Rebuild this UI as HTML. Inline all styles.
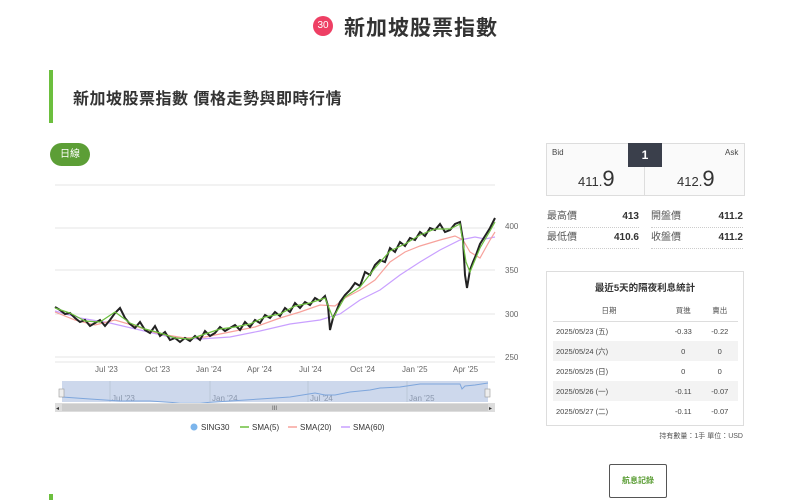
<!DOCTYPE html>
<html><head><meta charset="utf-8"><style>
body{margin:0;width:800px;height:500px;background:#fff;font-family:"Liberation Sans","Noto Sans CJK TC",sans-serif;color:#333;position:relative;overflow:hidden}
.a{position:absolute}
table{border-collapse:collapse}
</style></head><body>
<div class="a" style="left:313px;top:16px;width:20px;height:20px;border-radius:50%;background:#ee3f64;color:#fff;font-size:10px;line-height:20px;text-align:center">30</div>
<div class="a" style="left:344px;top:12px;font-size:21px;color:#333;letter-spacing:1px;font-weight:bold">新加坡股票指數</div>
<div class="a" style="left:49px;top:70px;width:4px;height:53px;background:#6cbf3e"></div>
<div class="a" style="left:73px;top:85px;font-size:16px;color:#333;letter-spacing:0.5px;font-weight:bold">新加坡股票指數 價格走勢與即時行情</div>
<div class="a" style="left:50px;top:143px;width:40px;height:23px;border-radius:12px;background:#5c9e36;color:#fff;font-size:10px;line-height:23px;text-align:center">日線</div>

<svg class="a" style="left:40px;top:175px" width="490" height="265" viewBox="40 175 490 265">
<g stroke="#e6e6e6" stroke-width="1">
<line x1="55" y1="185" x2="495" y2="185"/><line x1="55" y1="228" x2="495" y2="228"/><line x1="55" y1="270" x2="495" y2="270"/><line x1="55" y1="314" x2="495" y2="314"/><line x1="55" y1="357" x2="495" y2="357"/>
<line x1="55" y1="362" x2="495" y2="362"/>
</g>
<g font-size="8" fill="#666">
<text x="505" y="229">400</text><text x="505" y="273">350</text><text x="505" y="317">300</text><text x="505" y="360">250</text>
<text x="95" y="372">Jul '23</text><text x="145" y="372">Oct '23</text><text x="196" y="372">Jan '24</text><text x="247" y="372">Apr '24</text><text x="299" y="372">Jul '24</text><text x="350" y="372">Oct '24</text><text x="402" y="372">Jan '25</text><text x="453" y="372">Apr '25</text>
</g>
<polyline fill="none" stroke="#c9a0ff" stroke-width="1.2" points="55,311 80,318 110,323 140,330 170,337 200,339 230,337 260,331 290,324 320,320 340,314 360,300 380,290 400,275 420,262 440,250 460,240 475,237 485,239 495,237"/>
<polyline fill="none" stroke="#f7a29c" stroke-width="1.2" points="55,312 75,320 95,325 115,320 135,326 160,334 185,338 205,337 230,332 255,327 280,318 300,312 320,305 335,306 345,298 360,290 375,280 390,262 405,252 420,246 440,240 455,236 463,240 470,252 480,258 490,240 495,232"/>
<polyline fill="none" stroke="#222" stroke-width="2" points="55,307 60,310 65,314 70,313 75,318 80,322 85,320 90,326 95,323 100,320 105,326 110,320 115,313 120,308 125,318 130,324 135,328 140,322 145,330 150,333 155,326 160,336 165,332 170,340 175,338 180,342 185,338 190,341 195,336 200,340 205,331 210,336 215,333 220,327 225,331 230,328 235,325 240,330 245,322 250,327 255,320 260,323 265,315 270,318 275,312 280,316 285,308 290,312 295,303 300,308 305,302 310,305 315,298 320,301 325,296 328,306 330,330 333,318 336,312 340,302 345,295 350,290 355,283 360,286 365,272 370,275 375,265 380,260 385,262 390,248 395,252 400,242 405,246 410,238 415,240 420,232 425,236 430,228 435,230 440,224 445,232 450,230 455,224 460,222 463,240 465,275 467,288 470,270 473,262 476,255 480,244 485,236 490,228 495,218"/>
<polyline fill="none" stroke="#6cbf3e" stroke-width="1.2" points="55,308 70,313 85,321 100,322 115,312 130,323 145,329 160,333 175,338 190,339 205,334 220,329 235,327 250,324 265,317 280,314 295,306 310,303 325,298 333,318 345,297 360,287 375,268 390,251 405,244 420,235 435,229 450,229 460,224 466,262 470,272 480,248 490,231 495,222"/>
<rect x="55" y="380" width="440" height="23" fill="#fff"/>
<rect x="62" y="381" width="426" height="21" fill="#cdd8ec"/>
<g stroke="#bcc7d9"><line x1="110" y1="381" x2="110" y2="402"/><line x1="210" y1="381" x2="210" y2="402"/><line x1="308" y1="381" x2="308" y2="402"/><line x1="407" y1="381" x2="407" y2="402"/></g>
<g font-size="8" fill="#8a97ad"><text x="112" y="401">Jul '23</text><text x="212" y="401">Jan '24</text><text x="310" y="401">Jul '24</text><text x="409" y="401">Jan '25</text></g>
<polyline fill="none" stroke="#7ea6dc" stroke-width="1" points="62,397 90,399 120,401 150,401 180,403 200,403 230,401 260,399 290,397 315,393 325,395 335,395 350,392 370,390 380,388 400,387 420,384 440,384 460,384 462,389 465,386 475,385 488,383"/>
<rect x="59" y="389" width="5" height="8" fill="#eee" stroke="#999" stroke-width="0.6"/>
<rect x="485" y="389" width="5" height="8" fill="#eee" stroke="#999" stroke-width="0.6"/>
<rect x="55" y="403" width="440" height="9" fill="#ddd"/>
<rect x="62" y="404" width="426" height="7" fill="#ccc"/>
<text x="56" y="410" font-size="6" fill="#333">◂</text><text x="489" y="410" font-size="6" fill="#333">▸</text>
<text x="272" y="410" font-size="6" fill="#555">III</text>
<circle cx="194" cy="427" r="3.5" fill="#7cb5ec"/><text x="201" y="430" font-size="8" fill="#333">SING30</text>
<line x1="240" y1="427" x2="249" y2="427" stroke="#6cbf3e" stroke-width="1.5"/><text x="252" y="430" font-size="8" fill="#333">SMA(5)</text>
<line x1="288" y1="427" x2="297" y2="427" stroke="#f7a29c" stroke-width="1.5"/><text x="300" y="430" font-size="8" fill="#333">SMA(20)</text>
<line x1="341" y1="427" x2="350" y2="427" stroke="#c9a0ff" stroke-width="1.5"/><text x="353" y="430" font-size="8" fill="#333">SMA(60)</text>
</svg>

<div class="a" style="left:546px;top:143px;width:197px;height:51px;border:1px solid #ddd;background:#fafafa"></div>
<div class="a" style="left:644px;top:161px;width:1px;height:34px;background:#ddd"></div>
<div class="a" style="left:628px;top:143px;width:34px;height:24px;background:#3a3f4b;color:#fff;font-size:12px;line-height:24px;text-align:center;font-weight:bold">1</div>
<div class="a" style="left:552px;top:148px;font-size:8px;color:#444">Bid</div>
<div class="a" style="left:725px;top:148px;font-size:8px;color:#444">Ask</div>
<div class="a" style="left:578px;top:166px;color:#333"><span style="font-size:13px">411.</span><span style="font-size:22px">9</span></div>
<div class="a" style="left:677px;top:166px;color:#333"><span style="font-size:13px">412.</span><span style="font-size:22px">9</span></div>
<div class="a" style="left:547px;top:207px;width:92px;height:20px;border-bottom:1px dotted #ccc;font-size:10px;line-height:20px"><span style="color:#555">最高價</span><b style="float:right;color:#333">413</b></div>
<div class="a" style="left:651px;top:207px;width:92px;height:20px;border-bottom:1px dotted #ccc;font-size:10px;line-height:20px"><span style="color:#555">開盤價</span><b style="float:right;color:#333">411.2</b></div>
<div class="a" style="left:547px;top:228px;width:92px;height:20px;border-bottom:1px dotted #ccc;font-size:10px;line-height:20px"><span style="color:#555">最低價</span><b style="float:right;color:#333">410.6</b></div>
<div class="a" style="left:651px;top:228px;width:92px;height:20px;border-bottom:1px dotted #ccc;font-size:10px;line-height:20px"><span style="color:#555">收盤價</span><b style="float:right;color:#333">411.2</b></div>

<div class="a" style="left:546px;top:271px;width:196px;height:153px;border:1px solid #ddd"></div>
<div class="a" style="left:546px;top:280px;width:198px;text-align:center;font-size:9.5px;color:#333;font-weight:bold">最近5天的隔夜利息統計</div>
<table class="a" style="left:553px;top:300px;width:185px;font-size:7.5px;color:#444">
<tr style="height:21px;border-bottom:1px solid #ddd;color:#555"><td style="text-align:center;width:110px">日期</td><td style="text-align:center">買進</td><td style="text-align:center">賣出</td></tr>
<tr style="height:20px"><td style="padding-left:3px">2025/05/23 (五)</td><td style="text-align:center">-0.33</td><td style="text-align:center">-0.22</td></tr>
<tr style="height:20px;background:#f3f3f3"><td style="padding-left:3px">2025/05/24 (六)</td><td style="text-align:center">0</td><td style="text-align:center">0</td></tr>
<tr style="height:20px"><td style="padding-left:3px">2025/05/25 (日)</td><td style="text-align:center">0</td><td style="text-align:center">0</td></tr>
<tr style="height:20px;background:#f3f3f3"><td style="padding-left:3px">2025/05/26 (一)</td><td style="text-align:center">-0.11</td><td style="text-align:center">-0.07</td></tr>
<tr style="height:20px"><td style="padding-left:3px">2025/05/27 (二)</td><td style="text-align:center">-0.11</td><td style="text-align:center">-0.07</td></tr>
</table>
<div class="a" style="left:600px;top:431px;width:143px;text-align:right;font-size:7px;color:#555">持有數量：1手 單位：USD</div>
<div class="a" style="left:609px;top:464px;width:56px;height:32px;border:1px solid #555;border-radius:2px;font-size:8px;color:#5c9e36;line-height:32px;text-align:center;font-weight:bold">航息記錄</div>
<div class="a" style="left:49px;top:494px;width:4px;height:6px;background:#6cbf3e"></div>
</body></html>
